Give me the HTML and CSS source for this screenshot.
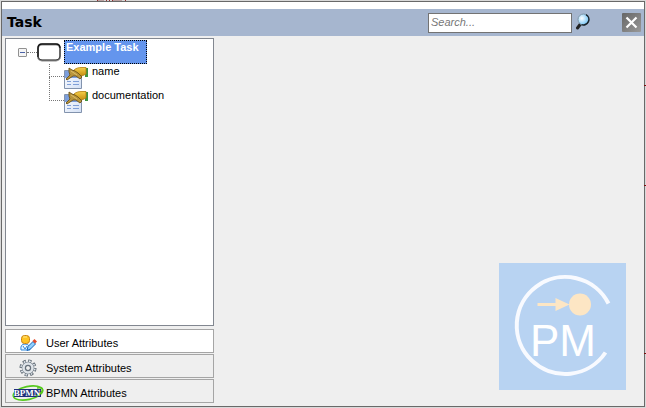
FILE: index.html
```
<!DOCTYPE html>
<html lang="en">
<head>
<meta charset="utf-8">
<title>Task</title>
<link rel="stylesheet" href="styles.css">
</head>
<body>
<svg width="0" height="0" class="defs" aria-hidden="true">
  <defs>
    <linearGradient id="gold" x1="0" y1="0" x2="0" y2="1"><stop offset="0" stop-color="#f6cf48"/><stop offset="1" stop-color="#c48d10"/></linearGradient>
    <linearGradient id="page" x1="0" y1="0" x2="1" y2="1"><stop offset="0" stop-color="#fff"/><stop offset="1" stop-color="#d3e0f5"/></linearGradient>
    <radialGradient id="lens" cx=".35" cy=".4"><stop offset="0" stop-color="#fff"/><stop offset="1" stop-color="#8fd0f8"/></radialGradient>
    <symbol id="attribute" viewBox="0 0 24 24">
      <path d="M.5 3.500h17v18H.5z" fill="url(#page)" stroke="#8293ad"/>
      <path d="M1 4h16v7H1z" fill="#7c9edb"/>
      <path d="M3 14.500h4M9 14.500h6M3 17.500h4M9 17.500h6" stroke="#7f9fd8"/>
      <path d="M21 1h3v9h-3z" fill="#3e9440"/>
      <path d="M10 3c2-2 5-2.500 8-2.500h4V7l-3 1.500c-4 1-7 0-9-1z" fill="url(#gold)" stroke="#b07c0c" stroke-width=".8"/>
      <path d="M5 1l3 2 3 1 3 2 4 4-2 2-4-3-3 0-6 4-1-1 4-4-1-3z" fill="#b9953a" stroke="#6d5418" stroke-width=".9"/>
      <path d="M7 4l3 2 3 2" fill="none" stroke="#dcc06a"/>
    </symbol>
  </defs>
</svg>
<main class="dialog">
  <header class="titlebar">
    <h1>Task</h1>
    <input class="search" type="text" placeholder="Search..." aria-label="Search">
    <button class="find" aria-label="Find">
      <svg width="16" height="17" viewBox="0 0 16 17"><path d="M5.500 11l-3 4" stroke="#222" stroke-width="3" stroke-linecap="round"/><circle cx="8.500" cy="6.500" r="5.500" fill="url(#lens)" stroke="#7f97a8" stroke-width="1"/><path d="M11 1.600A5.500 5.500 0 0 1 6.500 11.600" fill="none" stroke="#18242c" stroke-width="1.500"/></svg>
    </button>
    <button class="close" aria-label="Close">
      <svg width="19" height="19" viewBox="0 0 19 19"><path d="M4.500 4.500l10 10M14.500 4.500l-10 10" stroke="#fff" stroke-width="2.200"/></svg>
    </button>
  </header>
  <div class="content">
    <div class="sidebar">
      <ul class="tree">
        <li>
          <div class="row root">
            <button class="toggle" aria-label="Collapse"></button>
            <span class="link"></span>
            <svg width="24" height="19" viewBox="0 0 24 19"><rect x="1" y="1.500" width="22" height="16" rx="4" fill="#fff" stroke="#8c8c8c" stroke-width="2"/><path d="M1 14V5q0-4 4-4h14q4 0 4 4" fill="none" stroke="#111" stroke-width="1.400"/><path d="M1 13q0 4 4 4h14q4 0 4-4V5" fill="none" stroke="#444" stroke-width="1"/></svg>
            <span class="label selected">Example Task</span>
          </div>
          <ul class="children">
            <li class="row"><span class="branch first"></span><svg width="24" height="24"><use href="#attribute"/></svg><span class="label">name</span></li>
            <li class="row"><span class="branch"></span><svg width="24" height="24"><use href="#attribute"/></svg><span class="label">documentation</span></li>
          </ul>
        </li>
      </ul>
      <nav class="tabs">
        <button class="tab active">
          <svg width="32" height="18" viewBox="0 0 32 18"><path d="M9 16q-1-6 4-6 5 0 5 6z" fill="#e2f3ff" stroke="#2c86da"/><path d="M11 12l2 3 2-3" fill="#fff" stroke="#2c86da"/><rect x="9.500" y="1.500" width="8" height="8" rx="3" fill="#ffc524" stroke="#c98312"/><path d="M11 3h4" stroke="#ffe98c"/><path d="M15 16.500l1-4 5-5 2.500 2.500-5 5z" fill="#8fd0ff" stroke="#1b65b5"/><path d="M20.500 7l2-2 2.500 2.500-2 2z" fill="#e44a29"/></svg>
          User Attributes
        </button>
        <button class="tab">
          <svg width="32" height="18" viewBox="0 0 32 18"><circle cx="16" cy="9" r="7" fill="none" stroke="#56616c" stroke-width="3" stroke-dasharray="3.200 2.298"/><circle cx="16" cy="9" r="6.700" fill="none" stroke="#e4e9ee" stroke-width="2" stroke-dasharray="1.800 3.462" stroke-dashoffset="-.7"/><circle cx="16" cy="9" r="4.400" fill="none" stroke="#6c7782" stroke-width="3.800"/><circle cx="16" cy="9" r="4.500" fill="none" stroke="#dfe4e9" stroke-width="2.600"/><circle cx="16" cy="9" r="2.500" fill="#efefef" stroke="#56616c"/></svg>
          System Attributes
        </button>
        <button class="tab">
          <svg width="32" height="18" viewBox="0 0 32 18"><ellipse cx="16" cy="9" rx="15" ry="6.500" transform="rotate(-12 16 9)" fill="none" stroke="#56c91e" stroke-width="1.600"/><path d="M2 5h27v8H2z" fill="#1c2f79"/><path d="M25 4q6-1 5.500 2-.5 3-6 6" fill="none" stroke="#56c91e" stroke-width="1.600"/><text class="bpmn" x="15" y="12" text-anchor="middle">BPMN</text></svg>
          BPMN Attributes
        </button>
      </nav>
    </div>
    <section class="workspace">
      <svg class="logo" width="127" height="127" viewBox="0 0 127 127" role="img" aria-label="PM">
        <path d="M0 0h127v127H0z" fill="#b8d3f2"/>
        <path d="M109.500 40.500A48.500 48.500 0 1 0 106.500 89.500" fill="none" stroke="#f8faff" stroke-width="4"/>
        <path d="M38.500 40h18v-5l14 6.500-14 6.500v-5h-18z" fill="#fde6c4"/>
        <circle cx="81" cy="41.500" r="11" fill="#fde6c4"/>
        <text class="pm" x="64" y="93" text-anchor="middle">PM</text>
      </svg>
    </section>
  </div>
</main>
<svg class="canvas-marks" aria-hidden="true"><path d="M97 .5h7M112 .5h10" stroke="#b9a0a0"/><path d="M97.500 0v1M106.500 0v1M109.500 0v1M112.500 0v1M125.500 0v1" stroke="#943232"/><path d="M644 85.500h2M644 185.500h2M644 353.500h2" stroke="#7a1010"/></svg>
</body>
</html>
```
FILE: styles.css
```
* { box-sizing: border-box; }

body {
  margin: 0;
  height: 100vh;
  padding: 1px;
  background: #d9d9d9;
  font: 11px/14px "Liberation Sans", Arial, sans-serif;
  color: #000;
}

.defs { position: absolute; }
svg { flex: none; display: block; }
button { font: inherit; color: inherit; }
ul { list-style: none; margin: 0; padding: 0; }

.dialog {
  display: flex;
  flex-direction: column;
  height: 100%;
  padding-top: 7px;
  border: 1px solid #696969;
  background: #fff;
}

.titlebar {
  display: flex;
  align-items: center;
  height: 27px;
  padding: 0 3px 0 5px;
  background: #a6b6cf;
}

.titlebar h1 {
  flex: 1;
  margin: 0;
  padding-bottom: 2px;
  font: bold 14px/16px "DejaVu Sans", Verdana, sans-serif;
}

.search {
  width: 144px;
  height: 20px;
  padding: 0 2px 2px;
  border: 1px solid #737373;
  background: #fff;
  font: italic 11px/16px "Liberation Sans", Arial, sans-serif;
}
.search::placeholder { color: #777; opacity: 1; }

.find, .close { padding: 0; border: 0; background: none; }
.find { margin: 0 30px 0 3px; padding-bottom: 2px; }
.close { margin-left: 1px; background: linear-gradient(135deg, #666, #999); border-radius: 1px; }

.content {
  display: flex;
  flex: 1;
  min-height: 0;
  padding: 2px 3px;
  background: #efefef;
}

.sidebar { display: flex; flex-direction: column; gap: 3px; width: 209px; padding-bottom: 1px; }

.tree {
  flex: 1;
  padding: 1px 0 0 12px;
  border: 1px solid #828790;
  background: #fff;
}

.row { display: flex; height: 24px; }
.root { align-items: center; }

.toggle {
  width: 9px;
  height: 9px;
  padding: 0;
  border: 1px solid #919191;
  border-radius: 1px;
  background: linear-gradient(#4b63a7, #4b63a7) center / 5px 1px no-repeat #f5f5f5;
}

.link { width: 10px; border-top: 1px dotted #777; }

.label { padding: 0 4px; }
.root .label { align-self: stretch; margin-left: 3px; }
.selected {
  padding: 0 7px 0 1px;
  border: 1px dotted #000;
  background: #6495ed;
  color: #fff;
  line-height: 12px;
  font-weight: bold;
}

.children { padding-left: 31px; }
.children .row svg { margin-top: 3px; }
.branch {
  width: 15px;
  height: 24px;
  margin-top: -11px;
  border: dotted #777;
  border-width: 0 0 1px 1px;
}
.first { height: 13px; margin-top: 0; }

.tabs { display: flex; flex-direction: column; gap: 1px; }
.tab {
  display: flex;
  align-items: center;
  gap: 2px;
  height: 24px;
  padding: 3px 6px 0;
  border: 1px solid #a5a5a5;
  background: #efefef;
}
.active { background: #fff; }

.workspace {
  display: flex;
  flex: 1;
  align-items: flex-end;
  justify-content: flex-end;
  padding: 0 15px 14px 0;
}

.pm { font: 44px "Liberation Sans", Arial, sans-serif; fill: #fff; }
.bpmn { font: bold 9px "Liberation Serif", serif; fill: #fff; }

.canvas-marks {
  position: absolute;
  inset: 0;
  width: 100%;
  height: 100%;
  pointer-events: none;
}
```
